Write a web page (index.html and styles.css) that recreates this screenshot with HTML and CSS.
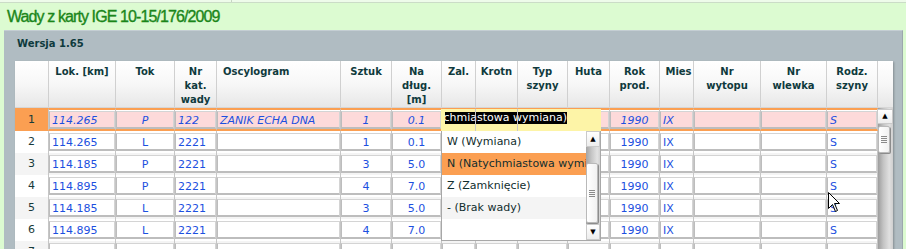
FILE: index.html
```html
<!DOCTYPE html>
<html lang="pl">
<head>
<meta charset="utf-8">
<title>Wady z karty IGE</title>
<link rel="stylesheet" href="styles.css">
</head>
<body>
<div class="topbar"><div class="topbar-sep"></div></div>
<h1 class="title">Wady z karty IGE 10-15/176/2009</h1>
<div class="panel">
  <div class="version">Wersja 1.65</div>
  <div class="gridwrap">
    <div class="hdr">
      <div></div>
      <div>Lok. [km]</div>
      <div>Tok</div>
      <div>Nr<br>kat.<br>wady</div>
      <div class="hl">Oscylogram</div>
      <div>Sztuk</div>
      <div>Na<br>dług.<br>[m]</div>
      <div>Zal.</div>
      <div>Krotn</div>
      <div>Typ<br>szyny</div>
      <div>Huta</div>
      <div>Rok<br>prod.</div>
      <div class="hm">Mies</div>
      <div>Nr<br>wytopu</div>
      <div>Nr<br>wlewka</div>
      <div>Rodz.<br>szyny</div>
      <div></div>
    </div>
    <div class="body">
      <div class="rows">
        <div class="row sel">
          <div class="n">1</div>
          <div><div class="box">114.265</div></div>
          <div><div class="box c">P</div></div>
          <div><div class="box">122</div></div>
          <div><div class="box">ZANIK ECHA DNA</div></div>
          <div><div class="box c">1</div></div>
          <div><div class="box c">0.1</div></div>
          <div><div class="box"></div></div>
          <div><div class="box"></div></div>
          <div><div class="box"></div></div>
          <div><div class="box"></div></div>
          <div><div class="box c">1990</div></div>
          <div><div class="box">IX</div></div>
          <div><div class="box"></div></div>
          <div><div class="box"></div></div>
          <div><div class="box">S</div></div>
        </div>
        <div class="row">
          <div class="n">2</div>
          <div><div class="box">114.265</div></div>
          <div><div class="box c">L</div></div>
          <div><div class="box">2221</div></div>
          <div><div class="box"></div></div>
          <div><div class="box c">1</div></div>
          <div><div class="box c">0.1</div></div>
          <div><div class="box"></div></div>
          <div><div class="box"></div></div>
          <div><div class="box"></div></div>
          <div><div class="box"></div></div>
          <div><div class="box c">1990</div></div>
          <div><div class="box">IX</div></div>
          <div><div class="box"></div></div>
          <div><div class="box"></div></div>
          <div><div class="box">S</div></div>
        </div>
        <div class="row alt">
          <div class="n">3</div>
          <div><div class="box">114.185</div></div>
          <div><div class="box c">P</div></div>
          <div><div class="box">2221</div></div>
          <div><div class="box"></div></div>
          <div><div class="box c">3</div></div>
          <div><div class="box c">5.0</div></div>
          <div><div class="box"></div></div>
          <div><div class="box"></div></div>
          <div><div class="box"></div></div>
          <div><div class="box"></div></div>
          <div><div class="box c">1990</div></div>
          <div><div class="box">IX</div></div>
          <div><div class="box"></div></div>
          <div><div class="box"></div></div>
          <div><div class="box">S</div></div>
        </div>
        <div class="row">
          <div class="n">4</div>
          <div><div class="box">114.895</div></div>
          <div><div class="box c">P</div></div>
          <div><div class="box">2221</div></div>
          <div><div class="box"></div></div>
          <div><div class="box c">4</div></div>
          <div><div class="box c">7.0</div></div>
          <div><div class="box"></div></div>
          <div><div class="box"></div></div>
          <div><div class="box"></div></div>
          <div><div class="box"></div></div>
          <div><div class="box c">1990</div></div>
          <div><div class="box">IX</div></div>
          <div><div class="box"></div></div>
          <div><div class="box"></div></div>
          <div><div class="box">S</div></div>
        </div>
        <div class="row alt">
          <div class="n">5</div>
          <div><div class="box">114.185</div></div>
          <div><div class="box c">L</div></div>
          <div><div class="box">2221</div></div>
          <div><div class="box"></div></div>
          <div><div class="box c">3</div></div>
          <div><div class="box c">5.0</div></div>
          <div><div class="box"></div></div>
          <div><div class="box"></div></div>
          <div><div class="box"></div></div>
          <div><div class="box"></div></div>
          <div><div class="box c">1990</div></div>
          <div><div class="box">IX</div></div>
          <div><div class="box"></div></div>
          <div><div class="box"></div></div>
          <div><div class="box">S</div></div>
        </div>
        <div class="row">
          <div class="n">6</div>
          <div><div class="box">114.895</div></div>
          <div><div class="box c">L</div></div>
          <div><div class="box">2221</div></div>
          <div><div class="box"></div></div>
          <div><div class="box c">4</div></div>
          <div><div class="box c">7.0</div></div>
          <div><div class="box"></div></div>
          <div><div class="box"></div></div>
          <div><div class="box"></div></div>
          <div><div class="box"></div></div>
          <div><div class="box c">1990</div></div>
          <div><div class="box">IX</div></div>
          <div><div class="box"></div></div>
          <div><div class="box"></div></div>
          <div><div class="box">S</div></div>
        </div>
        <div class="row alt">
          <div class="n">7</div>
          <div><div class="box"></div></div>
          <div><div class="box c"></div></div>
          <div><div class="box"></div></div>
          <div><div class="box"></div></div>
          <div><div class="box c"></div></div>
          <div><div class="box c"></div></div>
          <div><div class="box"></div></div>
          <div><div class="box"></div></div>
          <div><div class="box"></div></div>
          <div><div class="box"></div></div>
          <div><div class="box c"></div></div>
          <div><div class="box"></div></div>
          <div><div class="box"></div></div>
          <div><div class="box"></div></div>
          <div><div class="box"></div></div>
        </div>
      </div>
      <div class="vscroll">
        <div class="sb-btn">&#9650;</div>
        <div class="thumb"><div class="grip"></div></div>
      </div>
    </div>

    <div class="editor">
      <div class="editor-sel"><span>Natychmiastowa wymiana)</span></div>
      <div class="ed-line ed-l1"></div>
      <div class="ed-line ed-l2"></div>
    </div>

    <div class="dd">
      <div class="dd-list">
        <div class="dd-item">W (Wymiana)</div>
        <div class="dd-item hi">N (Natychmiastowa wymiana)</div>
        <div class="dd-item">Z (Zamknięcie)</div>
        <div class="dd-item alt">- (Brak wady)</div>
      </div>
      <div class="dd-sb">
        <div class="dd-btn">&#9650;</div>
        <div class="dd-track"></div>
        <div class="dd-thumb"><div class="grip"></div></div>
        <div class="dd-btn dd-down">&#9660;</div>
      </div>
    </div>

    <svg class="cursor" width="13" height="21" viewBox="0 0 13 21">
      <path d="M0.5 0.5 L0.5 16.5 L4.5 12.5 L7.5 19.5 L9.5 18.5 L6.5 11.5 L11.5 11.5 Z" fill="#fff" stroke="#000" stroke-width="1"/>
    </svg>
  </div>
</div>
</body>
</html>
```

FILE: styles.css
```css
html, body {
  margin: 0;
  padding: 0;
  overflow: hidden;
}
body {
  width: 906px;
  height: 249px;
  background: #dcfbd1;
  font-family: "DejaVu Sans", Verdana, sans-serif;
  --cols: 34px 67px 59px 42px 124px 51px 50px 34px 42px 50px 42px 50px 34px 67px 66px 51px;
}
.topbar {
  height: 2px;
  background: #eefbea;
  border-bottom: 1px solid #cbdcc7;
}
.topbar-sep {
  margin-left: 231px;
  width: 1px;
  height: 2px;
  background: #c6d6c2;
}
.title {
  margin: 0;
  height: 27px;
  padding-left: 7px;
  font: normal 16px/27px "Liberation Sans", Arial, sans-serif;
  letter-spacing: -0.9px;
  color: #1a861a;
  -webkit-text-stroke: 0.35px #1a861a;
}
.panel {
  margin-left: 4px;
  width: 899px;
  height: 219px;
  box-sizing: border-box;
  background: #b0bcc2;
  border-top: 1px solid #c4ced3;
  border-right: 1px solid #9ca7ad;
  padding: 6px 0 0 11px;
}
.version {
  font-weight: bold;
  font-size: 10px;
  line-height: 14px;
  color: #0e3a3d;
  padding-left: 2px;
  margin-bottom: 10px;
}
.gridwrap {
  position: relative;
  width: 878px;
  box-shadow: 1px 1px 2px rgba(0, 0, 0, 0.25);
}
.hdr {
  display: grid;
  grid-template-columns: var(--cols) 15px;
  height: 47px;
  box-sizing: border-box;
  background: linear-gradient(#ffffff 0%, #f7f7f7 50%, #e7e7e7 100%);
  border-bottom: 1px solid #d6d6d6;
}
.hdr > div {
  border-right: 1px solid #d0d0d0;
  padding-top: 4px;
  text-align: center;
  font-weight: bold;
  font-size: 10px;
  line-height: 14px;
  color: #0f3a3d;
  overflow: hidden;
  white-space: nowrap;
}
.hdr > div:last-child {
  border-right: 0;
}
.hdr > .hl {
  text-align: left;
  padding-left: 6px;
}
.hdr > .hm {
  padding-left: 4px;
}
.body {
  display: flex;
}
.rows {
  width: 863px;
}
.row {
  display: grid;
  grid-template-columns: var(--cols);
  height: 22px;
  background: #ffffff;
}
.row.alt {
  background: #f4f4f4;
}
.row > div {
  border-right: 1px solid #c6c6c6;
  padding: 2px 0;
}
.row > .n {
  padding: 0;
  text-align: center;
  line-height: 22px;
  font-size: 11px;
  color: #173a3a;
}
.box {
  height: 18px;
  box-sizing: border-box;
  border: 1px solid #d4d4d4;
  border-left-color: #bdbdbd;
  border-bottom: 2px solid #bdbdbd;
  background: #ffffff;
  padding: 2px 2px 0;
  font-size: 11px;
  line-height: 13px;
  color: #1c50e0;
  white-space: nowrap;
  overflow: hidden;
}
.box.c {
  text-align: center;
}
.row.sel {
  height: 23px;
}
.sel > div {
  border-top: 2px solid #fb9f52;
  border-bottom: 2px solid #fb9f52;
  padding: 1px 0 0;
}
.sel > .n {
  background: #fb9f52;
  line-height: 19px;
  padding: 0;
}
.sel .box {
  background: #fddada;
  font-style: italic;
}
.vscroll {
  width: 15px;
  height: 160px;
  background: linear-gradient(to right, #9d9d9d 0%, #c3c3c3 35%, #e0e0e0 75%, #cfcfcf 100%);
  display: flex;
  flex-direction: column;
  align-items: flex-start;
}
.sb-btn {
  width: 16px;
  height: 15px;
  margin-left: -1px;
  margin-top: 1px;
  box-sizing: border-box;
  border: 1px solid #cacaca;
  background: linear-gradient(#ffffff, #ededed);
  font-size: 7px;
  line-height: 13px;
  text-align: center;
  color: #000;
}
.thumb {
  width: 12px;
  height: 27px;
  margin: 2px 0 0 0;
  box-sizing: border-box;
  border: 1px solid #b9b9b9;
  border-radius: 2px;
  background: linear-gradient(to right, #ffffff, #f1f1f1);
  box-shadow: 1px 1px 0 #8c8c8c;
  display: flex;
  align-items: center;
  justify-content: center;
}
.grip {
  width: 6px;
  height: 7px;
  background: repeating-linear-gradient(to bottom, #8a8a8a 0 1px, transparent 1px 2px);
}
.editor {
  position: absolute;
  left: 426px;
  top: 48px;
  width: 160px;
  height: 22px;
  background: #fdf4a7;
}
.editor-sel {
  margin: 3px 0 0 4px;
  width: 122px;
  height: 12px;
  background: #000;
  color: #fff;
  font-size: 11px;
  line-height: 12px;
  display: flex;
  justify-content: flex-end;
  overflow: hidden;
  white-space: nowrap;
}
.ed-line {
  position: absolute;
  top: 0;
  width: 1px;
  height: 22px;
  background: #c9c9c9;
}
.ed-l1 { left: 34px; }
.ed-l2 { left: 76px; }
.dd {
  position: absolute;
  left: 426px;
  top: 70px;
  width: 160px;
  height: 110px;
  box-sizing: border-box;
  border: 1px solid #a8a8a8;
  border-top: 0;
  background: #fff;
  display: flex;
}
.dd-list {
  flex: 1;
  overflow: hidden;
}
.dd-item {
  height: 22px;
  line-height: 22px;
  padding-left: 5px;
  font-size: 11px;
  color: #112e2e;
  white-space: nowrap;
  overflow: hidden;
}
.dd-item.hi {
  background: #fb9f52;
}
.dd-item.alt {
  background: #f4f4f4;
}
.dd-sb {
  width: 14px;
  display: flex;
  flex-direction: column;
  background: linear-gradient(to right, #a4a4a4 0%, #c6c6c6 40%, #e2e2e2 80%, #d2d2d2 100%);
}
.dd-btn {
  height: 16px;
  box-sizing: border-box;
  border: 1px solid #cacaca;
  background: linear-gradient(#ffffff, #ededed);
  font-size: 7px;
  line-height: 14px;
  text-align: center;
  color: #000;
}
.dd-track {
  height: 16px;
}
.dd-thumb {
  width: 12px;
  height: 60px;
  box-sizing: border-box;
  border: 1px solid #b9b9b9;
  border-radius: 2px;
  background: linear-gradient(to right, #ffffff, #f1f1f1);
  box-shadow: 1px 1px 0 #8c8c8c;
  display: flex;
  align-items: center;
  justify-content: center;
}
.dd-down {
  margin-top: auto;
}
.cursor {
  position: absolute;
  left: 813px;
  top: 131px;
}
```
